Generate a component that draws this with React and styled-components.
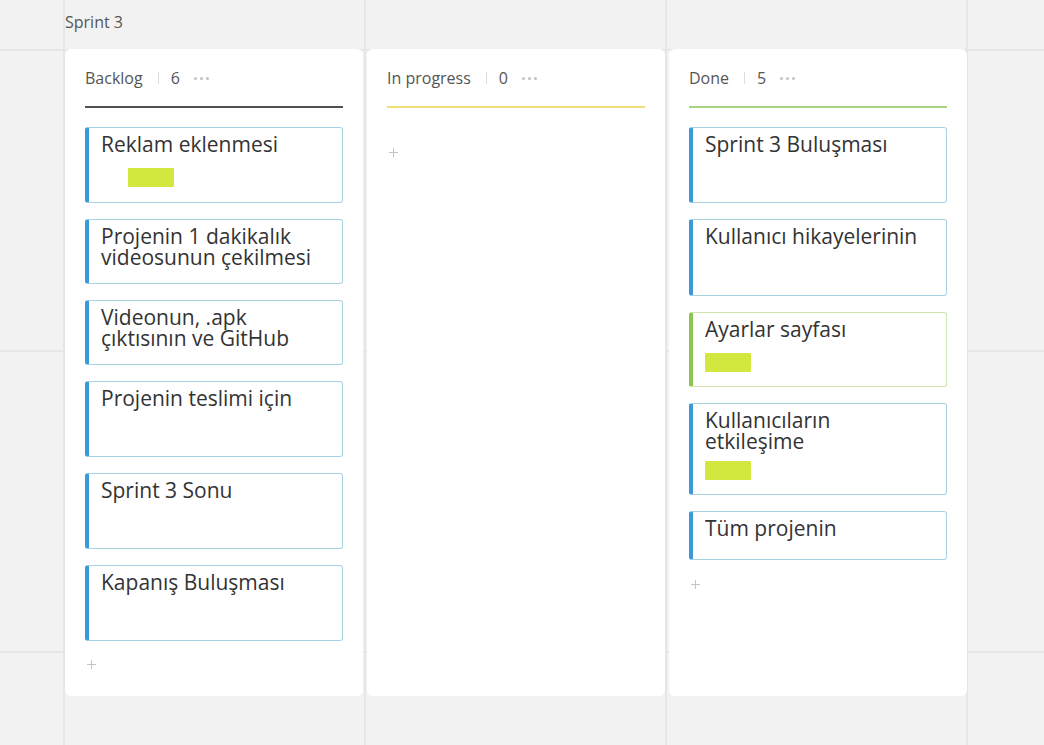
import React from "react";
import styled, { createGlobalStyle } from "styled-components";

const GlobalStyle = createGlobalStyle`
  html, body { margin: 0; padding: 0; }
  body {
    width: 1044px;
    height: 745px;
    overflow: hidden;
    font-family: "Open Sans", "Noto Sans", sans-serif;
    background-color: #f2f2f2;
    background-image:
      linear-gradient(to right, #e6e6e6 0, #e6e6e6 2px, transparent 2px),
      linear-gradient(to bottom, #e6e6e6 0, #e6e6e6 2px, transparent 2px);
    background-size: 301px 301px;
    background-position: 63px 49px;
  }
`;

const Page = styled.div`
  padding: 12px 0 0 65px;
`;

const FrameTitle = styled.div`
  font-size: 16px;
  line-height: 20px;
  color: #555;
`;

const Board = styled.div`
  display: flex;
  gap: 4px;
  margin-top: 17px;
`;

const Column = styled.section`
  width: 298px;
  height: 647px;
  box-sizing: border-box;
  background: #fff;
  border-radius: 6px;
  padding: 0 20px;
`;

const Header = styled.header`
  display: flex;
  align-items: center;
  padding: 19px 0 18px 0;
  border-bottom: 2px solid ${(p) => p.$accent};
  font-size: 16px;
  line-height: 20px;
  color: #555;
`;

const Sep = styled.span`
  width: 1px;
  height: 12px;
  background: #ddd;
  margin: 0 12px 0 15px;
`;

const Count = styled.span`
  color: #555;
`;

const Dots = styled.span`
  display: flex;
  gap: 3px;
  margin-left: 14px;
  span {
    width: 3px;
    height: 3px;
    border-radius: 50%;
    background: #c2c2c2;
  }
`;

const CardList = styled.div`
  display: flex;
  flex-direction: column;
  gap: 16px;
  margin-top: 19px;
`;

const Card = styled.div`
  box-sizing: border-box;
  min-height: ${(p) => p.$h}px;
  border: 1px solid ${(p) => (p.$green ? "#cfe4ae" : "#a9d1e5")};
  border-left: 4px solid ${(p) => (p.$green ? "#8cc54e" : "#3c99d9")};
  border-radius: 3px;
  padding: 6px 12px 14px 12px;
  color: #333;
  font-size: 21px;
  line-height: 21px;
`;

const Tag = styled.div`
  width: 46px;
  height: 19px;
  background: #d3e83f;
  border-radius: 1px;
  margin-top: ${(p) => p.$mt}px;
  margin-left: ${(p) => p.$indent || 0}px;
`;

const AddButton = styled.div`
  display: flex;
  margin: ${(p) => p.$mt}px 0 0 2px;
  width: 9px;
  height: 9px;
`;

const Plus = () => (
  <svg width="9" height="9" viewBox="0 0 9 9">
    <path d="M4.5 0v9M0 4.5h9" stroke="#c4c4c4" strokeWidth="1" />
  </svg>
);

const columns = [
  {
    title: "Backlog",
    accent: "#505050",
    addGap: 19,
    cards: [
      { text: "Reklam eklenmesi", h: 76, tag: 13, indent: 27 },
      { text: "Projenin 1 dakikalık videosunun çekilmesi", h: 65 },
      { text: "Videonun, .apk çıktısının ve GitHub", h: 65 },
      { text: "Projenin teslimi için", h: 76 },
      { text: "Sprint 3 Sonu", h: 76 },
      { text: "Kapanış Buluşması", h: 76 },
    ],
    count: 6,
  },
  { title: "In progress", accent: "#f3dc7a", cards: [], count: 0, addGap: 21 },
  {
    title: "Done",
    accent: "#a8d37f",
    count: 5,
    addGap: 20,
    cards: [
      { text: "Sprint 3 Buluşması", h: 76 },
      { text: "Kullanıcı hikayelerinin", h: 77 },
      { text: "Ayarlar sayfası", h: 75, tag: 13, green: true },
      { text: "Kullanıcıların etkileşime", h: 92, tag: 9, lines: ["Kullanıcıların", "etkileşime"] },
      { text: "Tüm projenin", h: 49 },
    ],
  },
];

const Text = styled.div``;

export default function App() {
  return (
    <>
      <GlobalStyle />
      <Page>
        <FrameTitle>Sprint 3</FrameTitle>
        <Board>
          {columns.map((col) => (
            <Column key={col.title}>
              <Header $accent={col.accent}>
                <span>{col.title}</span>
                <Sep />
                <Count>{col.count}</Count>
                <Dots>
                  <span />
                  <span />
                  <span />
                </Dots>
              </Header>
              <CardList>
                {col.cards.map((c) => (
                  <Card key={c.text} $h={c.h} $green={c.green}>
                    <Text>
                      {c.lines
                        ? c.lines.map((l, i) => (
                            <React.Fragment key={i}>
                              {l}
                              {i < c.lines.length - 1 && <br />}
                            </React.Fragment>
                          ))
                        : c.text}
                    </Text>
                    {c.tag && <Tag $mt={c.tag} $indent={c.indent} />}
                  </Card>
                ))}
              </CardList>
              <AddButton $mt={col.addGap}>
                <Plus />
              </AddButton>
            </Column>
          ))}
        </Board>
      </Page>
    </>
  );
}
